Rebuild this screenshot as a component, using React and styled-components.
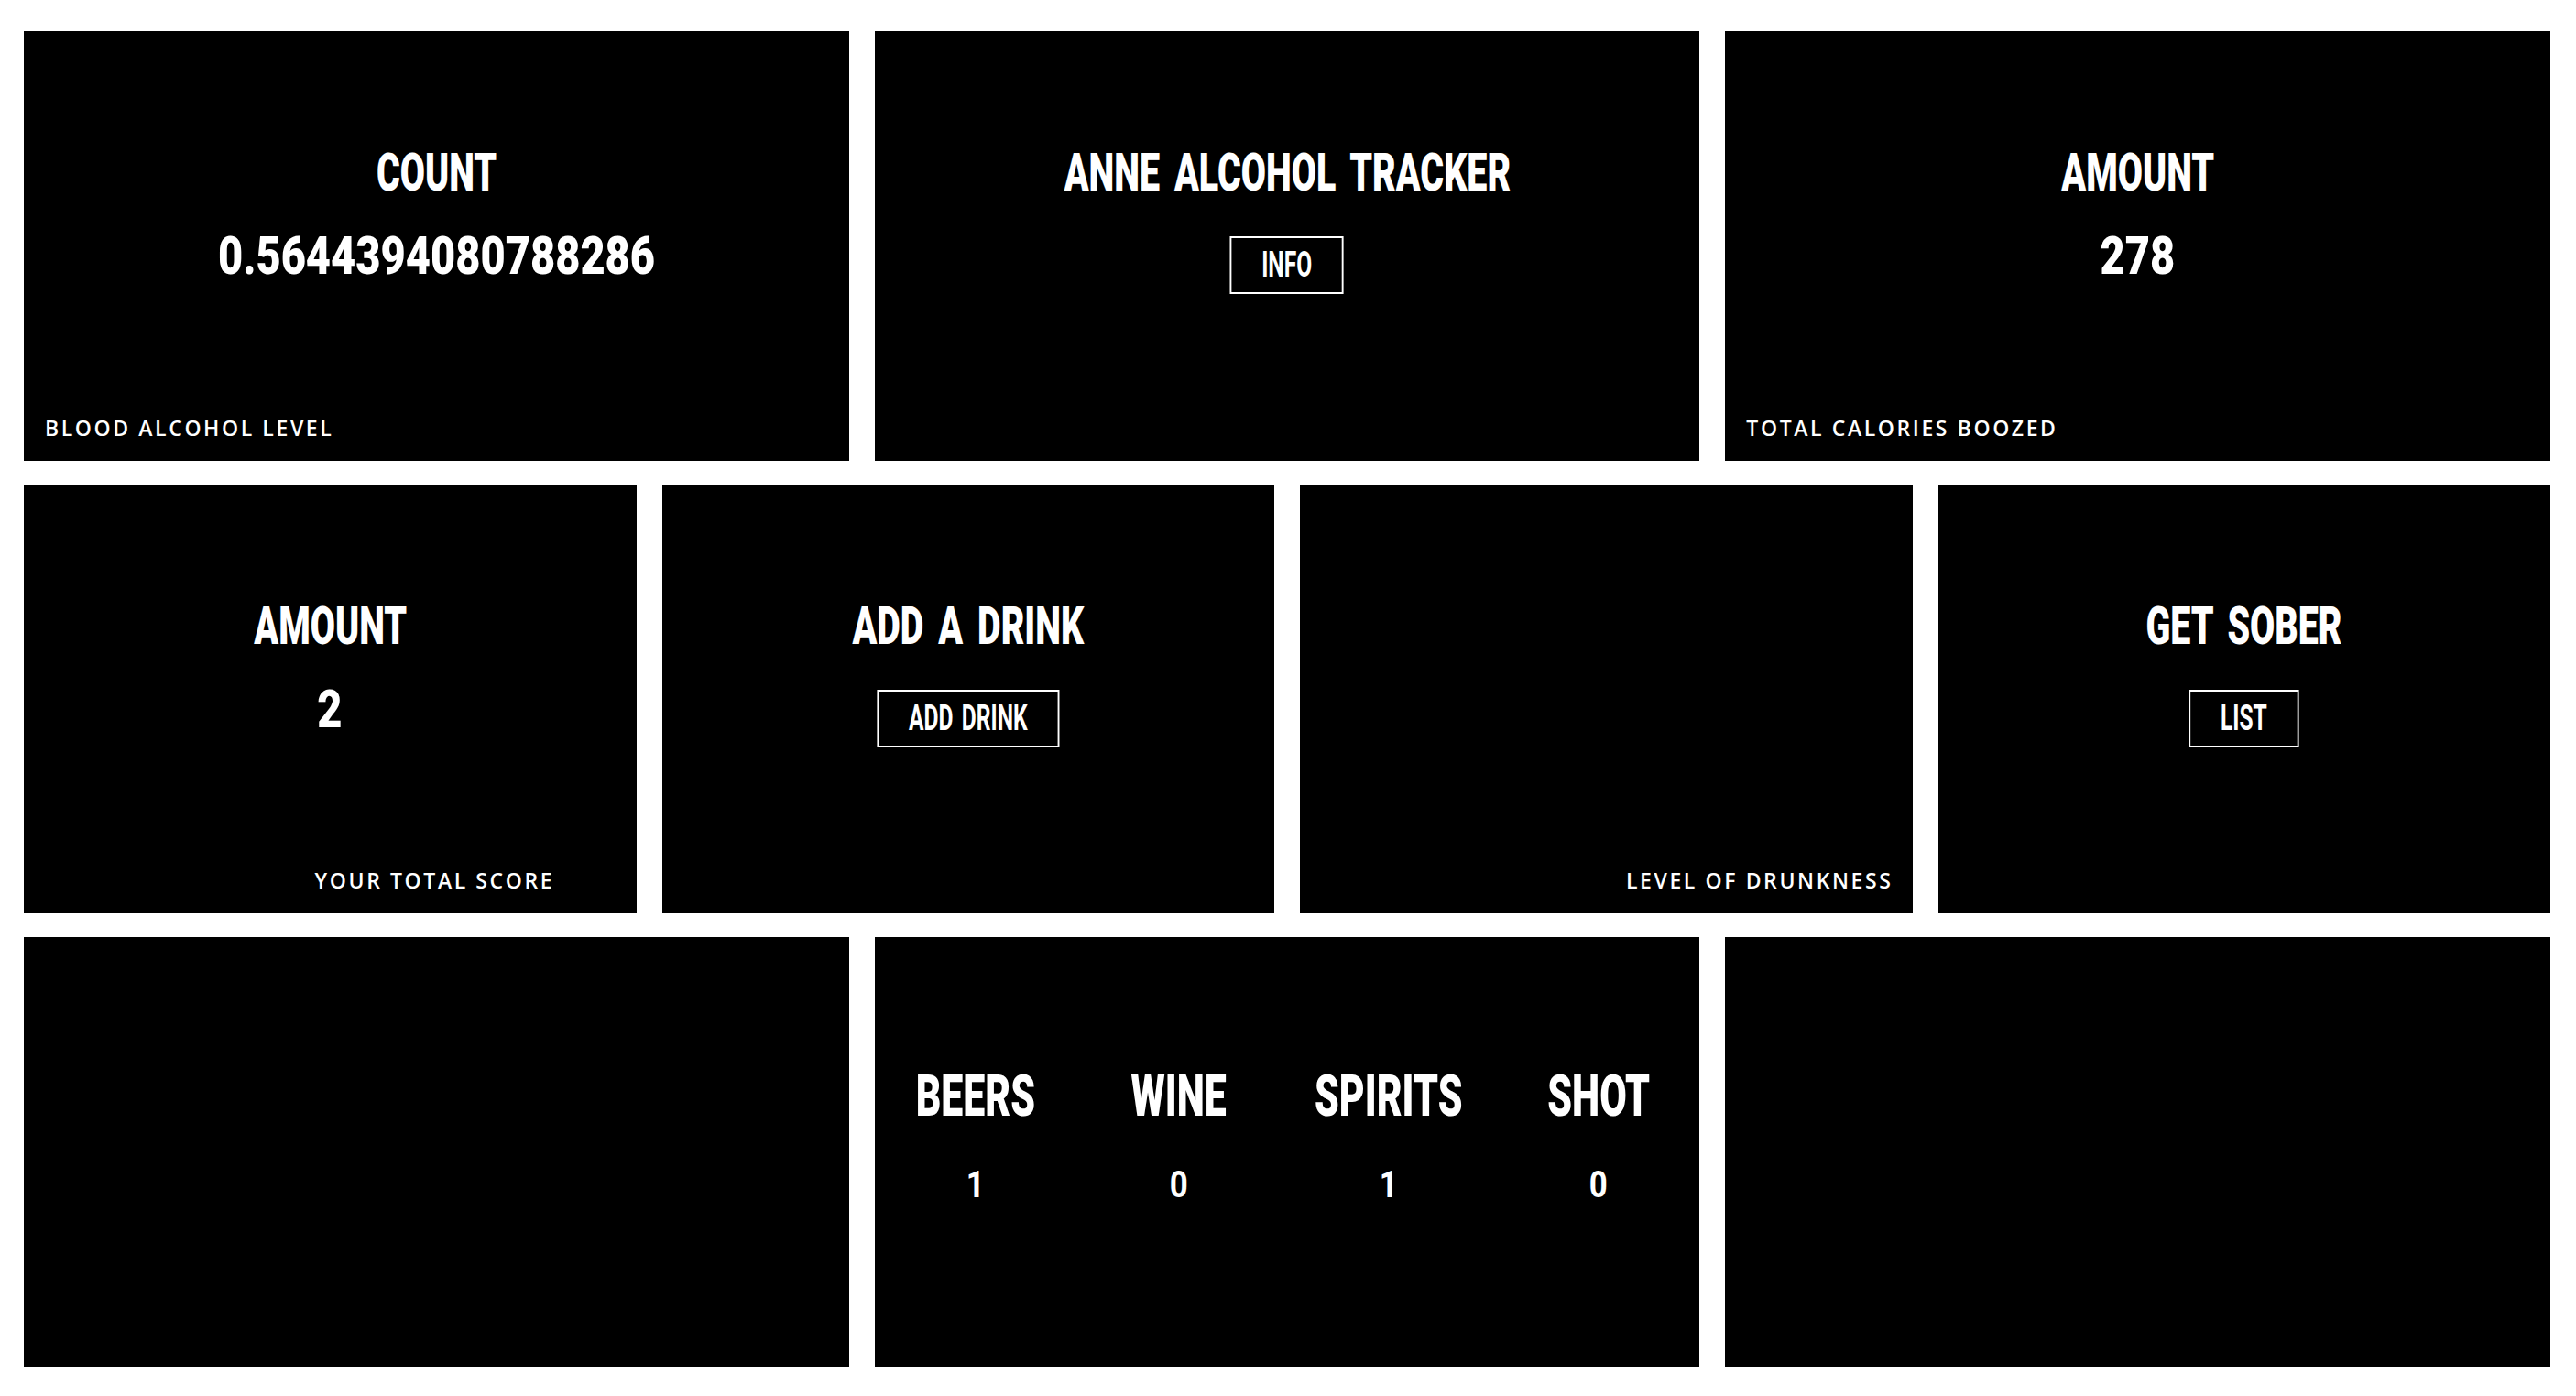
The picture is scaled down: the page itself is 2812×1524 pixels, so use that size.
import React from "react";
import styled, { createGlobalStyle } from "styled-components";

const GlobalStyle = createGlobalStyle`
  html, body {
    margin: 0;
    padding: 0;
    background: #ffffff;
  }
  body {
    font-family: "Open Sans", "Liberation Sans", sans-serif;
  }
`;

const Page = styled.main`
  box-sizing: border-box;
  height: 100vh;
  padding: 34px 28px 32px 26px;
  display: flex;
  flex-direction: column;
  gap: 26px;
`;

const Row = styled.section`
  flex: 1;
  min-height: 0;
  display: flex;
  gap: 28px;
`;

const Card = styled.article`
  flex: 1;
  min-width: 0;
  background: #000;
  color: #fff;
  display: flex;
  flex-direction: column;
  align-items: center;
  overflow: hidden;
`;

const Heading = styled.h2`
  margin: 125px 0 0;
  font-family: Roboto, "Liberation Sans", sans-serif;
  font-weight: 900;
  font-size: 58px;
  line-height: 1;
  word-spacing: 9px;
  white-space: nowrap;
  text-transform: uppercase;
  transform: scaleX(0.68);
`;

const Value = styled.div`
  margin-top: 33px;
  font-family: Roboto, "Liberation Sans", sans-serif;
  font-weight: 900;
  font-size: 58px;
  line-height: 1;
  white-space: nowrap;
  transform: scaleX(0.81);
`;

const OutlineButton = styled.button`
  margin-top: 41px;
  box-sizing: border-box;
  height: 63px;
  padding: 0 52px;
  background: transparent;
  color: #fff;
  border: 2px solid #fff;
  border-left-width: 3px;
  border-right-width: 3px;
  font-family: Roboto, "Liberation Sans", sans-serif;
  font-weight: 700;
  font-size: 39px;
  line-height: 1;
  word-spacing: 5px;
  white-space: nowrap;
  text-transform: uppercase;
  transform: scaleX(0.63);
  cursor: pointer;
`;

const Caption = styled.p`
  margin: auto 0 0;
  align-self: stretch;
  padding: 0 21px 24px ${(p) => (p.$align === "mid" ? "47.5%" : "23px")};
  font-family: "Open Sans", "Liberation Sans", sans-serif;
  font-weight: 600;
  font-size: 23px;
  line-height: 1;
  letter-spacing: 2.6px;
  text-transform: uppercase;
  white-space: nowrap;
  text-align: ${(p) => (p.$align === "end" ? "right" : "left")};
`;

const DrinkGrid = styled.div`
  align-self: stretch;
  margin-top: 142px;
  display: grid;
  grid-template-columns: repeat(4, 1fr);
`;

const DrinkColumn = styled.div`
  display: flex;
  flex-direction: column;
  align-items: center;
`;

const DrinkName = styled.h3`
  margin: 0;
  font-family: Roboto, "Liberation Sans", sans-serif;
  font-weight: 900;
  font-size: 63px;
  line-height: 1;
  white-space: nowrap;
  transform: scaleX(0.68);
`;

const DrinkCount = styled.span`
  margin-top: 45px;
  font-family: Roboto, "Liberation Sans", sans-serif;
  font-weight: 700;
  font-size: 41px;
  line-height: 1;
  transform: scaleX(0.85);
`;

const drinks = [
  { name: "BEERS", count: 1 },
  { name: "WINE", count: 0 },
  { name: "SPIRITS", count: 1 },
  { name: "SHOT", count: 0 },
];

export default function App() {
  return (
    <>
      <GlobalStyle />
      <Page>
        <Row>
          <Card>
            <Heading>Count</Heading>
            <Value>0.5644394080788286</Value>
            <Caption>Blood alcohol level</Caption>
          </Card>
          <Card>
            <Heading>Anne Alcohol Tracker</Heading>
            <OutlineButton>Info</OutlineButton>
          </Card>
          <Card>
            <Heading>Amount</Heading>
            <Value>278</Value>
            <Caption>Total calories boozed</Caption>
          </Card>
        </Row>
        <Row>
          <Card>
            <Heading>Amount</Heading>
            <Value>2</Value>
            <Caption $align="mid">Your total score</Caption>
          </Card>
          <Card>
            <Heading>Add a drink</Heading>
            <OutlineButton>Add drink</OutlineButton>
          </Card>
          <Card>
            <Caption $align="end">Level of drunkness</Caption>
          </Card>
          <Card>
            <Heading>Get sober</Heading>
            <OutlineButton>List</OutlineButton>
          </Card>
        </Row>
        <Row>
          <Card />
          <Card>
            <DrinkGrid>
              {drinks.map((d) => (
                <DrinkColumn key={d.name}>
                  <DrinkName>{d.name}</DrinkName>
                  <DrinkCount>{d.count}</DrinkCount>
                </DrinkColumn>
              ))}
            </DrinkGrid>
          </Card>
          <Card />
        </Row>
      </Page>
    </>
  );
}
